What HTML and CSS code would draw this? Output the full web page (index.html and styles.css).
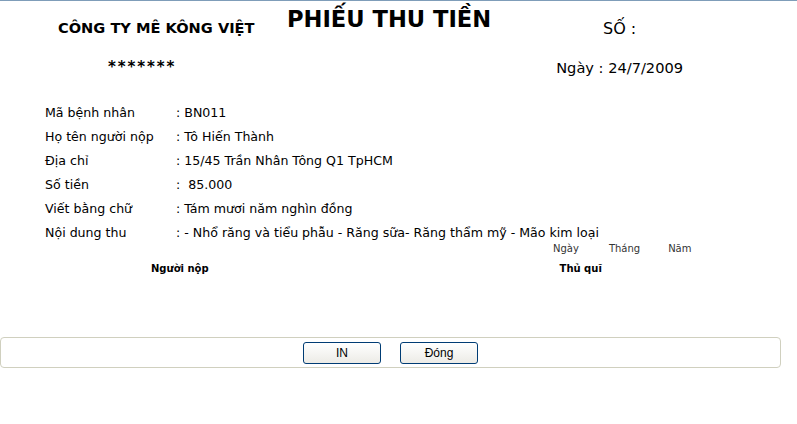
FILE: index.html
```html
<!DOCTYPE html>
<html lang="vi">
<head>
<meta charset="utf-8">
<title>Phiếu thu tiền</title>
<link rel="stylesheet" href="styles.css">
</head>
<body>
<div class="page">
  <div class="header">
    <div class="h-row1">
      <div class="company">CÔNG TY MÊ KÔNG VIỆT</div>
      <div class="title">PHIẾU THU TIỀN</div>
      <div class="so">SỐ :</div>
    </div>
    <div class="h-row2">
      <div class="stars">*******</div>
      <div class="ngay">Ngày : 24/7/2009</div>
    </div>
  </div>

  <div class="form">
    <div class="label">Mã bệnh nhân</div><div class="value">: BN011</div>
    <div class="label">Họ tên người nộp</div><div class="value">: Tô Hiến Thành</div>
    <div class="label">Địa chỉ</div><div class="value">: 15/45 Trần Nhân Tông Q1 TpHCM</div>
    <div class="label">Số tiền</div><div class="value">:&nbsp; 85.000</div>
    <div class="label">Viết bằng chữ</div><div class="value">: Tám mươi năm nghìn đồng</div>
    <div class="label">Nội dung thu</div><div class="value">: - Nhổ răng và tiểu phẫu - Răng sữa- Răng thẩm mỹ - Mão kim loại</div>
  </div>

  <div class="dates">
    <span class="d-ngay">Ngày</span>
    <span class="d-thang">Tháng</span>
    <span class="d-nam">Năm</span>
  </div>
  <div class="signs">
    <div class="sign-left">Người nộp</div>
    <div class="sign-right">Thủ quĩ</div>
  </div>

  <div class="actions">
    <button class="btn">IN</button>
    <button class="btn">Đóng</button>
  </div>
</div>
</body>
</html>
```
FILE: styles.css
```css
html, body {
  margin: 0;
  padding: 0;
  background: #fff;
}
body {
  font-family: "DejaVu Sans", Tahoma, Verdana, sans-serif;
  color: #000;
  border-top: 1px solid #7f9db9;
}
.page {
  width: 797px;
}
.header {
  display: flex;
  flex-direction: column;
}
.h-row1 {
  display: flex;
  align-items: flex-start;
  height: 48px;
}
.company {
  margin-left: 58px;
  width: 229px;
  margin-top: 18px;
  font-weight: bold;
  font-size: 14.6px;
  white-space: nowrap;
}
.title {
  width: 316px;
  margin-top: 5px;
  font-weight: bold;
  font-size: 22.6px;
  white-space: nowrap;
}
.so {
  margin-top: 18px;
  font-size: 16px;
}
.h-row2 {
  display: flex;
  align-items: flex-start;
  height: 48px;
}
.stars {
  margin-left: 108px;
  margin-top: 9px;
  font-weight: bold;
  font-size: 15px;
  letter-spacing: 1.9px;
}
.ngay {
  margin-left: auto;
  margin-right: 114px;
  margin-top: 10px;
  font-size: 14.6px;
}
.form {
  display: grid;
  grid-template-columns: 131px 1fr;
  grid-auto-rows: 24px;
  padding-left: 45px;
  padding-top: 3px;
  font-size: 12.6px;
  align-items: center;
}
.dates {
  display: flex;
  font-size: 10px;
  color: #333;
  padding-left: 553px;
  margin-top: -1px;
  height: 14px;
}
.d-thang { margin-left: 30px; }
.d-nam { margin-left: 28px; }
.signs {
  display: flex;
  font-size: 10px;
  font-weight: bold;
  margin-top: 6px;
}
.sign-left { margin-left: 151px; }
.sign-right { margin-left: 351px; }
.actions {
  margin-top: 63px;
  width: 779px;
  height: 29px;
  border: 1px solid #d0d0bf;
  border-radius: 4px;
  display: flex;
  justify-content: center;
  align-items: center;
  gap: 19px;
}
.btn {
  width: 78px;
  height: 22px;
  border: 1px solid #003c74;
  border-radius: 3px;
  background: linear-gradient(#ffffff, #ecebe6);
  font-family: "Liberation Sans", Arial, sans-serif;
  font-size: 12px;
  color: #000;
  padding: 0;
}
```
